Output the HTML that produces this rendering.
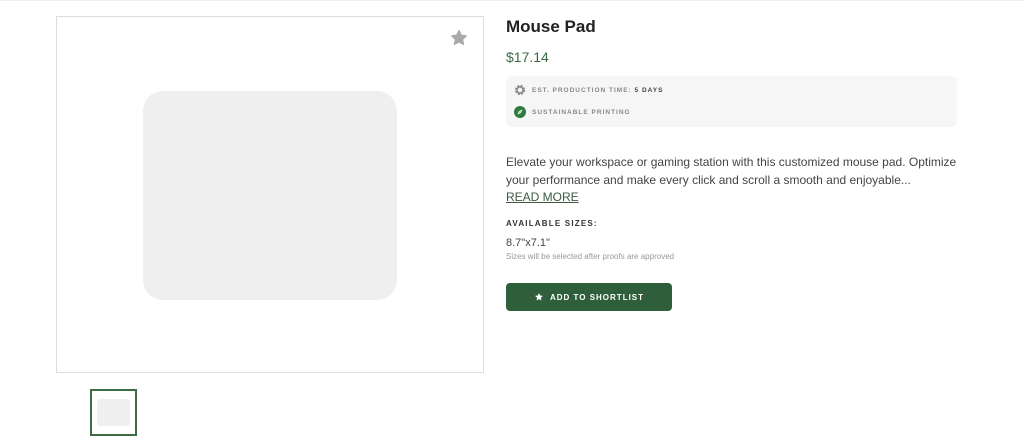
<!DOCTYPE html>
<html><head><meta charset="utf-8"><style>
*{margin:0;padding:0;box-sizing:border-box}
body{width:1024px;height:443px;background:#fff;font-family:"Liberation Sans",sans-serif;position:relative;overflow:hidden;border-top:1px solid #eee}
.abs{position:absolute}
.main{left:56px;top:15px;width:428px;height:357px;border:1px solid #ddd;background:#fff}
.pad{left:143px;top:90px;width:254px;height:209px;background:#efefef;border-radius:20px}
.thumb{left:90px;top:388px;width:47px;height:47px;border:2px solid #3d6b46}
.tin{left:97px;top:398px;width:33px;height:27px;background:#efefef;border-radius:3px}
.title{left:506px;top:16px;font-size:17px;font-weight:bold;color:#222}
.price{left:506px;top:48px;font-size:14px;color:#3a6b45}
.info{left:506px;top:75px;width:451px;height:51px;background:#f6f6f6;border-radius:6px}
.lab{font-size:6.5px;letter-spacing:1px;color:#888;font-weight:bold}
.desc{left:506px;top:153px;width:470px;font-size:12px;line-height:17.5px;color:#444}
.rm{left:506px;top:189px;font-size:12px;color:#3a5a44;text-decoration:underline}
.as{left:506px;top:218px;font-size:8px;font-weight:bold;letter-spacing:1.2px;color:#333}
.sz{left:506px;top:236px;font-size:11px;color:#444}
.note{left:506px;top:251px;font-size:8px;color:#999}
.btn{left:506px;top:282px;width:166px;height:28px;background:#2e5f3a;border-radius:4px;color:#fff;font-size:8px;font-weight:bold;letter-spacing:1px;display:flex;align-items:center;justify-content:center;gap:6px}
</style></head><body>
<div class="abs main"></div>
<svg class="abs" style="left:450px;top:28px" width="18" height="18" viewBox="0 0 24 24"><path d="M12 2.5l2.9 6 6.6.8-4.9 4.5 1.3 6.5L12 17l-5.9 3.3 1.3-6.5L2.5 9.3l6.6-.8z" fill="#aaa" stroke="#aaa" stroke-linejoin="round" stroke-width="2"/></svg>
<div class="abs pad"></div>
<div class="abs thumb"></div>
<div class="abs tin"></div>
<div class="abs title">Mouse Pad</div>
<div class="abs price">$17.14</div>
<div class="abs info"></div>
<svg class="abs" style="left:514px;top:83px" width="12" height="12" viewBox="0 0 12 12"><circle cx="6" cy="6" r="4" fill="none" stroke="#888" stroke-width="2.2" stroke-dasharray="2 1.2"/><circle cx="6" cy="6" r="3" fill="none" stroke="#888" stroke-width="1.5"/></svg>
<div class="abs lab" style="left:532px;top:86px">EST. PRODUCTION TIME: <span style="color:#444">5 DAYS</span></div>
<svg class="abs" style="left:514px;top:105px" width="12" height="12" viewBox="0 0 12 12"><circle cx="6" cy="6" r="6" fill="#2e7a3e"/><path d="M3.5 8.5C4 5 6 4 8.5 3.5 8 6 7 8 3.5 8.5z" fill="#bfe0c4"/></svg>
<div class="abs lab" style="left:532px;top:108px">SUSTAINABLE PRINTING</div>
<div class="abs desc">Elevate your workspace or gaming station with this customized mouse pad. Optimize your performance and make every click and scroll a smooth and enjoyable...</div>
<div class="abs rm">READ MORE</div>
<div class="abs as">AVAILABLE SIZES:</div>
<div class="abs sz">8.7"x7.1"</div>
<div class="abs note">Sizes will be selected after proofs are approved</div>
<div class="abs btn"><svg width="10" height="10" viewBox="0 0 24 24"><path d="M12 2.5l2.9 6 6.6.8-4.9 4.5 1.3 6.5L12 17l-5.9 3.3 1.3-6.5L2.5 9.3l6.6-.8z" fill="#fff"/></svg>ADD TO SHORTLIST</div>
</body></html>
